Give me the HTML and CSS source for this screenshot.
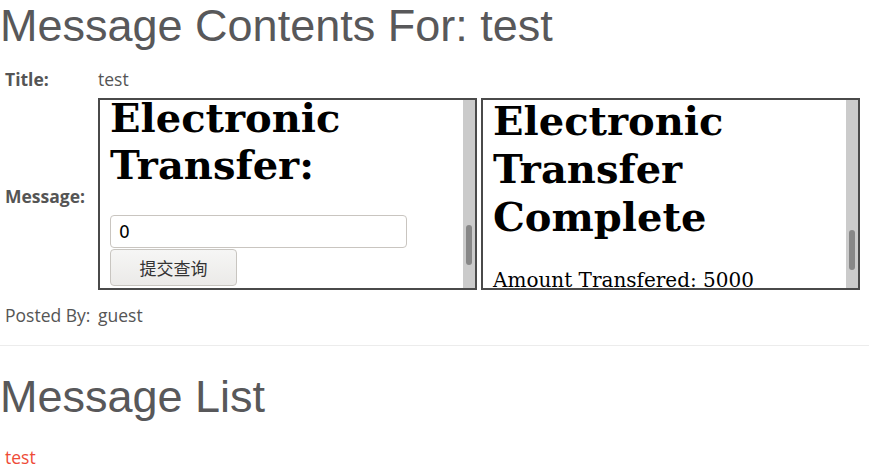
FILE: index.html
```html
<!DOCTYPE html>
<html>
<head>
<meta charset="utf-8">
<link rel="stylesheet" href="styles.css">
</head>
<body>
<h1 class="page-title">Message Contents For: test</h1>
<div class="details">
  <div class="label">Title:</div>
  <div class="value">test</div>
  <div class="label label-mid">Message:</div>
  <div class="frames">
    <div class="frame">
      <div class="frame-view">
        <div class="frame-doc doc-a">
          <h1 class="doc-title">Electronic Transfer:</h1>
          <input class="doc-input" type="text" value="0">
          <button class="doc-button" type="button">提交查询</button>
        </div>
      </div>
      <div class="scrollbar track-a"><div class="thumb"></div></div>
    </div>
    <div class="frame">
      <div class="frame-view">
        <div class="frame-doc doc-b">
          <h1 class="doc-title">Electronic Transfer Complete</h1>
          <p class="doc-text">Amount Transfered: 5000</p>
        </div>
      </div>
      <div class="scrollbar track-b"><div class="thumb"></div></div>
    </div>
  </div>
  <div class="label label-plain posted">Posted By:</div>
  <div class="value posted">guest</div>
</div>
<hr class="divider">
<h1 class="page-title list-title">Message List</h1>
<a class="msg-link" href="#">test</a>
</body>
</html>
```
FILE: styles.css
```css
html, body {
  margin: 0;
  padding: 0;
  background: #fff;
}
body {
  font-family: "Open Sans", "Liberation Sans", sans-serif;
  font-size: 17.5px;
  color: #555;
}
.page-title {
  margin: 0;
  font-family: "Liberation Sans", Arial, sans-serif;
  font-weight: normal;
  font-size: 45px;
  line-height: normal;
  color: #58585a;
}
.details {
  display: grid;
  grid-template-columns: 98px auto;
  row-gap: 7px;
  margin-top: 16px;
  align-items: start;
}
.label {
  padding-left: 5px;
  font-weight: bold;
  line-height: 23px;
}
.label-mid {
  align-self: center;
  padding-top: 5px;
}
.label-plain {
  font-weight: normal;
}
.value {
  line-height: 23px;
}
.posted {
  margin-top: 7px;
}
.frames {
  display: flex;
  gap: 4px;
}
.frame {
  width: 375px;
  height: 188px;
  border: 2px solid #4a4a4a;
  display: flex;
  overflow: hidden;
  background: #fff;
}
.frame-view {
  flex: 1;
  overflow: hidden;
  color: #000;
  font-family: "DejaVu Serif", serif;
}
.frame-doc {
  padding: 0 10px;
}
.doc-title {
  font-size: 40px;
  font-weight: bold;
  margin: 0 0 27px;
}
.doc-a .doc-title {
  line-height: 47px;
  margin-top: -6px;
}
.doc-b .doc-title {
  line-height: 48px;
  margin-top: -3px;
}
.doc-text {
  margin: 0;
  font-size: 20px;
  line-height: normal;
}
.doc-input {
  display: block;
  box-sizing: border-box;
  width: 297px;
  height: 33px;
  margin: 0;
  padding: 0 8px;
  border: 1px solid #c9c5c0;
  border-radius: 4px;
  font-family: "DejaVu Sans", sans-serif;
  font-size: 17px;
  color: #000;
  background: #fff;
}
.doc-button {
  display: block;
  box-sizing: border-box;
  width: 127px;
  height: 37px;
  margin: 1px 0 0;
  border: 1px solid #c8c5c0;
  border-radius: 4px;
  background: linear-gradient(#f6f6f5, #ebeae8);
  font-family: "Noto Sans CJK SC", sans-serif;
  font-size: 17px;
  color: #333;
}
.scrollbar {
  width: 12px;
  background: #cbcbcb;
  display: flex;
  justify-content: center;
  flex-shrink: 0;
}
.thumb {
  width: 6px;
  height: 40px;
  border-radius: 3px;
  background: #878787;
}
.track-a {
  padding-top: 125px;
  box-sizing: border-box;
}
.track-b {
  padding-top: 130px;
  box-sizing: border-box;
}
.divider {
  margin: 18px 0 0;
  border: 0;
  border-top: 1px solid #ececec;
  height: 0;
}
.list-title {
  margin-top: 25px;
}
.msg-link {
  display: block;
  margin-top: 23px;
  padding-left: 5px;
  color: #ee4b37;
  text-decoration: none;
  line-height: 23px;
}
```
